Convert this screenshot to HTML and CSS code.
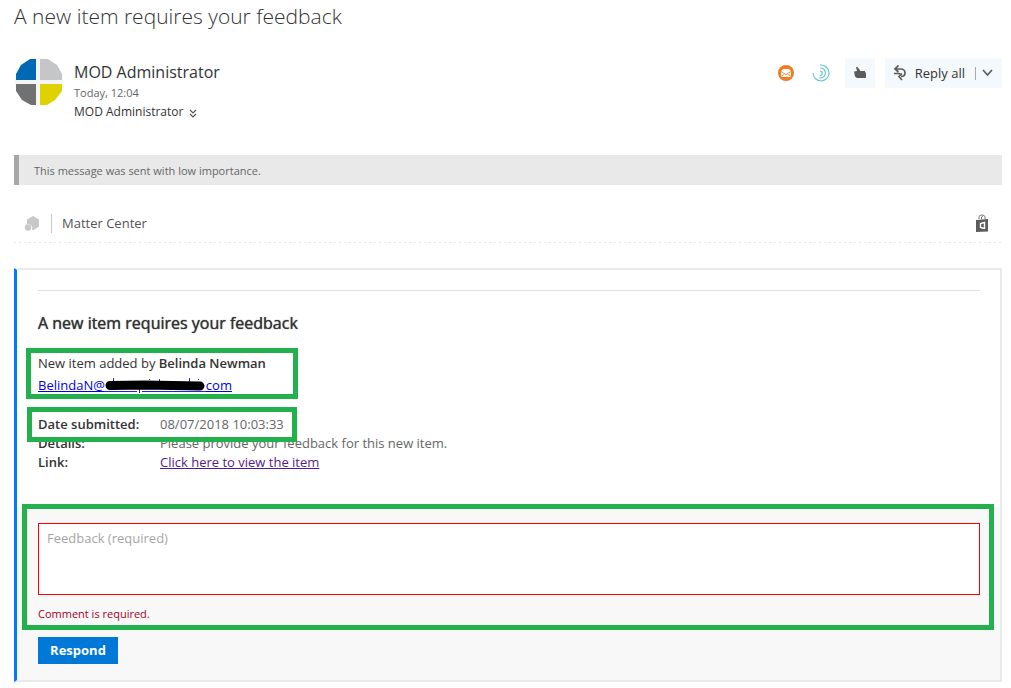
FILE: index.html
```html
<!DOCTYPE html>
<html lang="en">
  <head>
    <meta charset="UTF-8">
    <title>A new item requires your feedback</title>
    <link rel="stylesheet" href="styles.css">
  </head>
<body>
  <h1 class="subject">A new item requires your feedback</h1>

  <header class="header">
    <svg class="avatar" viewBox="0 0 48 48" width="48" height="48">
      <clipPath id="round"><path d="M15 1h18l9 6 5 9v17l-7 9-8 5H16l-9-5-6-9V16l5-9z"/></clipPath>
      <circle cx="24" cy="24" r="24" fill="#f5f5f5"/>
      <g clip-path="url(#round)">
        <path fill="#0069b4" d="M0 0h21v22H0z"/>
        <path fill="#c5c6c8" d="M25 0h22v22H25z"/>
        <path fill="#707173" d="M0 26h21v22H0z"/>
        <path fill="#ded300" d="M25 26h22v22H25z"/>
      </g>
    </svg>
    <div class="sender">
      <div class="name">MOD Administrator</div>
      <div class="time">Today, 12:04</div>
      <div class="to">MOD Administrator
        <svg width="8" height="9" viewBox="0 0 8 9" fill="none" stroke="#555" stroke-width="1.200"><path d="M1 1l3 3 3-3M1 5l3 3 3-3"/></svg>
      </div>
    </div>
    <div class="actions">
      <button class="icon" aria-label="Mail add-in">
        <svg width="16" height="16" viewBox="0 0 16 16">
          <circle cx="8" cy="8" r="8" fill="#f47b20"/>
          <path fill="#fff" d="M3 6l2-2h6l2 2v6H3z"/>
          <path fill="none" stroke="#f47b20" stroke-width=".8" d="M3 6.500l5 3 5-3M3 11.500L6.500 9M13 11.500L9.500 9"/>
        </svg>
      </button>
      <button class="icon" aria-label="Tracking add-in">
        <svg width="18" height="18" viewBox="0 0 18 18" fill="none" stroke="#62c4d0" stroke-width="1.100">
          <path d="M8 1a8 8 0 1 1-7 8M8 4a5 5 0 1 1-1 9.800M8 7a2.200 2.200 0 1 1 0 4.400"/>
        </svg>
      </button>
      <button class="like" aria-label="Like">
        <svg width="14" height="14" viewBox="0 0 14 14" fill="#5c5c5c"><path d="M3 1h1.500L7.500 5H12v1.500h1V12H4l-2-1.500-1-5L4 5z"/></svg>
      </button>
      <div class="reply">
        <button class="reply-all">
          <svg width="14" height="16" viewBox="0 0 14 16" fill="none" stroke="#5c5c5c" stroke-width="1.700">
            <path d="M5.500 .5L2 4l3.500 3M2 4h6a4 4 0 0 1 4 4c0 2.500-2 3.500-4 3.500M9 8.500L6 11.500 9 15M1 8.500h5l2 1"/>
          </svg>
          Reply all
        </button>
        <button class="more" aria-label="More actions">
          <svg width="11" height="8" viewBox="0 0 11 8" fill="none" stroke="#5c5c5c" stroke-width="1.700"><path d="M1 1l4.500 5L10 1"/></svg>
        </button>
      </div>
    </div>
  </header>

  <div class="importance">This message was sent with low importance.</div>

  <div class="addins">
    <svg width="16" height="16" viewBox="0 0 16 16" fill="#c8c8c8">
      <path d="M9 0l6 3.500v7L9.500 14H8c1-4-1.500-6.500-5-6V3.500z"/><circle cx="4" cy="11.500" r="3.200"/>
    </svg>
    <a class="addin" href="#">Matter Center</a>
    <button class="store" aria-label="Store">
      <svg width="12" height="19" viewBox="0 0 12 19">
        <path fill="none" stroke="#777" d="M3 5V2.500L5 1h2l2 1.500V5M5.500 5V3L7 2"/>
        <path fill="#5c5c5c" d="M0 6l12-1v12.500L0 18z"/>
        <path fill="none" stroke="#fff" stroke-width="1.400" d="M8.500 15V8.500L4.500 9.500v4l4 1"/>
      </svg>
    </button>
  </div>

  <main class="card">
    <div class="details">
      <hr>
      <h2>A new item requires your feedback</h2>
      <div class="author marked">
        <div>New item added by <b>Belinda Newman</b></div>
        <a href="#">BelindaN@<svg class="blackout" width="101" height="18" viewBox="0 0 101 18">
          <path fill="none" stroke="#2222e0" d="M8.500 2v4M34.500 12v5M44.500 3v1M54.500 3v3M84.500 2v4M93.500 3v1M0 15.500h32M37 15.500h64"/>
          <path fill="none" stroke="#000" stroke-width="9" stroke-linecap="round" d="M5 9.500L40 9l55 1"/>
        </svg>com</a>
      </div>
      <dl>
        <div class="row date marked">
          <dt>Date submitted:</dt>
          <dd>08/07/2018 10:03:33</dd>
        </div>
        <div class="row">
          <dt>Details:</dt>
          <dd>Please provide your feedback for this new item.</dd>
        </div>
        <div class="row">
          <dt>Link:</dt>
          <dd><a class="visited" href="#">Click here to view the item</a></dd>
        </div>
      </dl>
    </div>
    <form class="respond">
      <div class="field marked">
        <textarea id="feedback" aria-label="Feedback" aria-describedby="error" placeholder="Feedback (required)"></textarea>
        <label class="error" id="error" for="feedback">Comment is required.</label>
      </div>
      <button class="submit" type="button">Respond</button>
    </form>
  </main>
</body>
</html>
```

FILE: styles.css
```css
*, *::after {
  box-sizing: border-box;
}

body {
  margin: 0;
  padding: 4px 9px 6px 14px;
  font-family: "Segoe UI", "Open Sans", sans-serif;
  font-size: 13px;
  line-height: 19px;
  color: #333;
  background: #fff;
}

button {
  font: inherit;
  color: inherit;
  border: 0;
  padding: 0;
  background: none;
}

svg {
  flex: none;
}

.subject {
  margin: 0 0 30px;
  font-size: 21px;
  font-weight: 300;
  line-height: 24px;
}

.header {
  display: flex;
  align-items: flex-start;
  height: 97px;
}

.avatar {
  margin-left: 1px;
}

.sender {
  margin-left: 11px;
  padding-top: 3px;
}

.name {
  font-size: 16px;
  line-height: 22px;
}

.to {
  font-size: 12px;
}

.time {
  font-size: 11px;
  color: #666;
}

.to svg {
  margin-left: 2px;
  vertical-align: -2px;
}

.actions {
  display: flex;
  align-items: center;
  margin-left: auto;
}

.icon {
  display: flex;
  justify-content: center;
  width: 35px;
}

.like, .reply {
  display: flex;
  align-items: center;
  justify-content: center;
  height: 30px;
  background: #f4f9fd;
}

.like {
  width: 30px;
  margin: 0 10px 0 6px;
}

.reply {
  padding: 0 9px 0 8px;
}

.reply-all {
  display: flex;
  align-items: center;
  gap: 8px;
}

.more {
  display: flex;
  align-items: center;
  height: 13px;
  margin-left: 10px;
  padding-left: 6px;
  border-left: 1px solid #aaa;
}

.importance {
  padding: 6px 15px 5px;
  border-left: 5px solid #a6a6a6;
  background: #e9e9e9;
  color: #666;
  font-size: 11px;
}

.addins {
  display: flex;
  align-items: center;
  margin-bottom: 25px;
  padding: 29px 14px 10px 10px;
  background: repeating-linear-gradient(to right, #e6e6e6 0 2px, transparent 2px 5px) bottom / 100% 1px no-repeat;
}

.addin {
  margin-left: 11px;
  padding-left: 10px;
  border-left: 1px solid #c8c8c8;
  color: #555;
  text-decoration: none;
}

.store {
  display: flex;
  margin-left: auto;
}

.card {
  border: 2px solid #eaeaea;
  border-left: 3px solid #0078ff;
}

.details {
  padding: 20px 20px 35px 21px;
}

hr {
  margin: 0;
  border: 0;
  border-top: 1px solid #e1e1e1;
}

h2 {
  margin: 21px 0 18px;
  font-size: 16px;
  font-weight: 400;
  line-height: 22px;
  text-shadow: 0 0 1px #333;
}

.author {
  line-height: 22px;
}

.author b {
  font-weight: 600;
}

a {
  color: #0000ee;
}

.visited {
  color: #551a8b;
}

.blackout {
  vertical-align: -4px;
}

dl {
  margin: 19px 0 0;
}

.row {
  display: flex;
}

dt {
  width: 122px;
  font-weight: 600;
}

dd {
  margin: 0;
  color: #666;
}

/* green highlight boxes, drawn over the message */
.marked {
  position: relative;
}

.marked::after {
  content: "";
  position: absolute;
  border: 5px solid #22b14c;
  pointer-events: none;
}

.author::after {
  inset: -4px auto -3px -12px;
  width: 272px;
}

.date::after {
  inset: -8px auto -8px -11px;
  width: 270px;
}

.field::after {
  inset: -19px -14px -7px -16px;
}

.respond {
  padding: 16px 20px 16px 21px;
  background: #f8f8f8;
}

.field {
  margin-bottom: 14px;
}

textarea {
  display: block;
  width: 100%;
  height: 72px;
  margin-bottom: 9px;
  padding: 5px 8px;
  border: 1px solid #f00;
  font: inherit;
  resize: none;
}

textarea::placeholder {
  color: #a6a6a6;
}

.error {
  display: block;
  color: #a80022;
  font-size: 11px;
}

.submit {
  display: block;
  width: 80px;
  height: 27px;
  background: #0078d7;
  color: #fff;
  font-weight: 700;
}
```
